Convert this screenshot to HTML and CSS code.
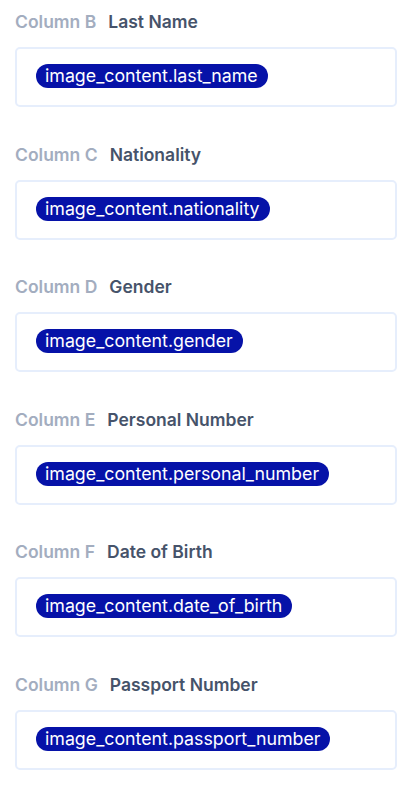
FILE: index.html
```html
<!DOCTYPE html>
<html>
<head>
<meta charset="utf-8">
<link rel="stylesheet" href="styles.css">
</head>
<body>
<div class="list">
  <div class="field">
    <div class="label"><span class="col">Column B</span><span class="name">Last Name</span></div>
    <div class="box"><span class="pill">image_content.last_name</span></div>
  </div>
  <div class="field">
    <div class="label"><span class="col">Column C</span><span class="name">Nationality</span></div>
    <div class="box"><span class="pill">image_content.nationality</span></div>
  </div>
  <div class="field">
    <div class="label"><span class="col">Column D</span><span class="name">Gender</span></div>
    <div class="box"><span class="pill">image_content.gender</span></div>
  </div>
  <div class="field">
    <div class="label"><span class="col">Column E</span><span class="name">Personal Number</span></div>
    <div class="box"><span class="pill">image_content.personal_number</span></div>
  </div>
  <div class="field">
    <div class="label"><span class="col">Column F</span><span class="name">Date of Birth</span></div>
    <div class="box"><span class="pill">image_content.date_of_birth</span></div>
  </div>
  <div class="field">
    <div class="label"><span class="col">Column G</span><span class="name">Passport Number</span></div>
    <div class="box"><span class="pill">image_content.passport_number</span></div>
  </div>
</div>
</body>
</html>
```
FILE: styles.css
```css
html, body {
  margin: 0;
  padding: 0;
  background: #ffffff;
}
body {
  font-family: "Inter", "Noto Sans", sans-serif;
}
.list {
  padding: 10px 21px 0 15px;
  display: flex;
  flex-direction: column;
  gap: 35.6px;
}
.field {
  display: flex;
  flex-direction: column;
  gap: 13px;
}
.label {
  height: 24px;
  line-height: 24px;
  font-size: 17.5px;
  font-weight: 600;
  display: flex;
  gap: 12px;
}
.col {
  color: #a3adbf;
}
.name {
  color: #46536a;
}
.box {
  box-sizing: border-box;
  height: 60px;
  border: 2px solid #e6eefc;
  border-radius: 5px;
  padding: 15px 0 0 19px;
}
.pill {
  display: inline-block;
  height: 24px;
  line-height: 24px;
  padding: 0 10px 0 9px;
  border-radius: 12px;
  background: #0612a8;
  color: #ffffff;
  font-size: 17.8px;
  font-weight: 400;
}
```
